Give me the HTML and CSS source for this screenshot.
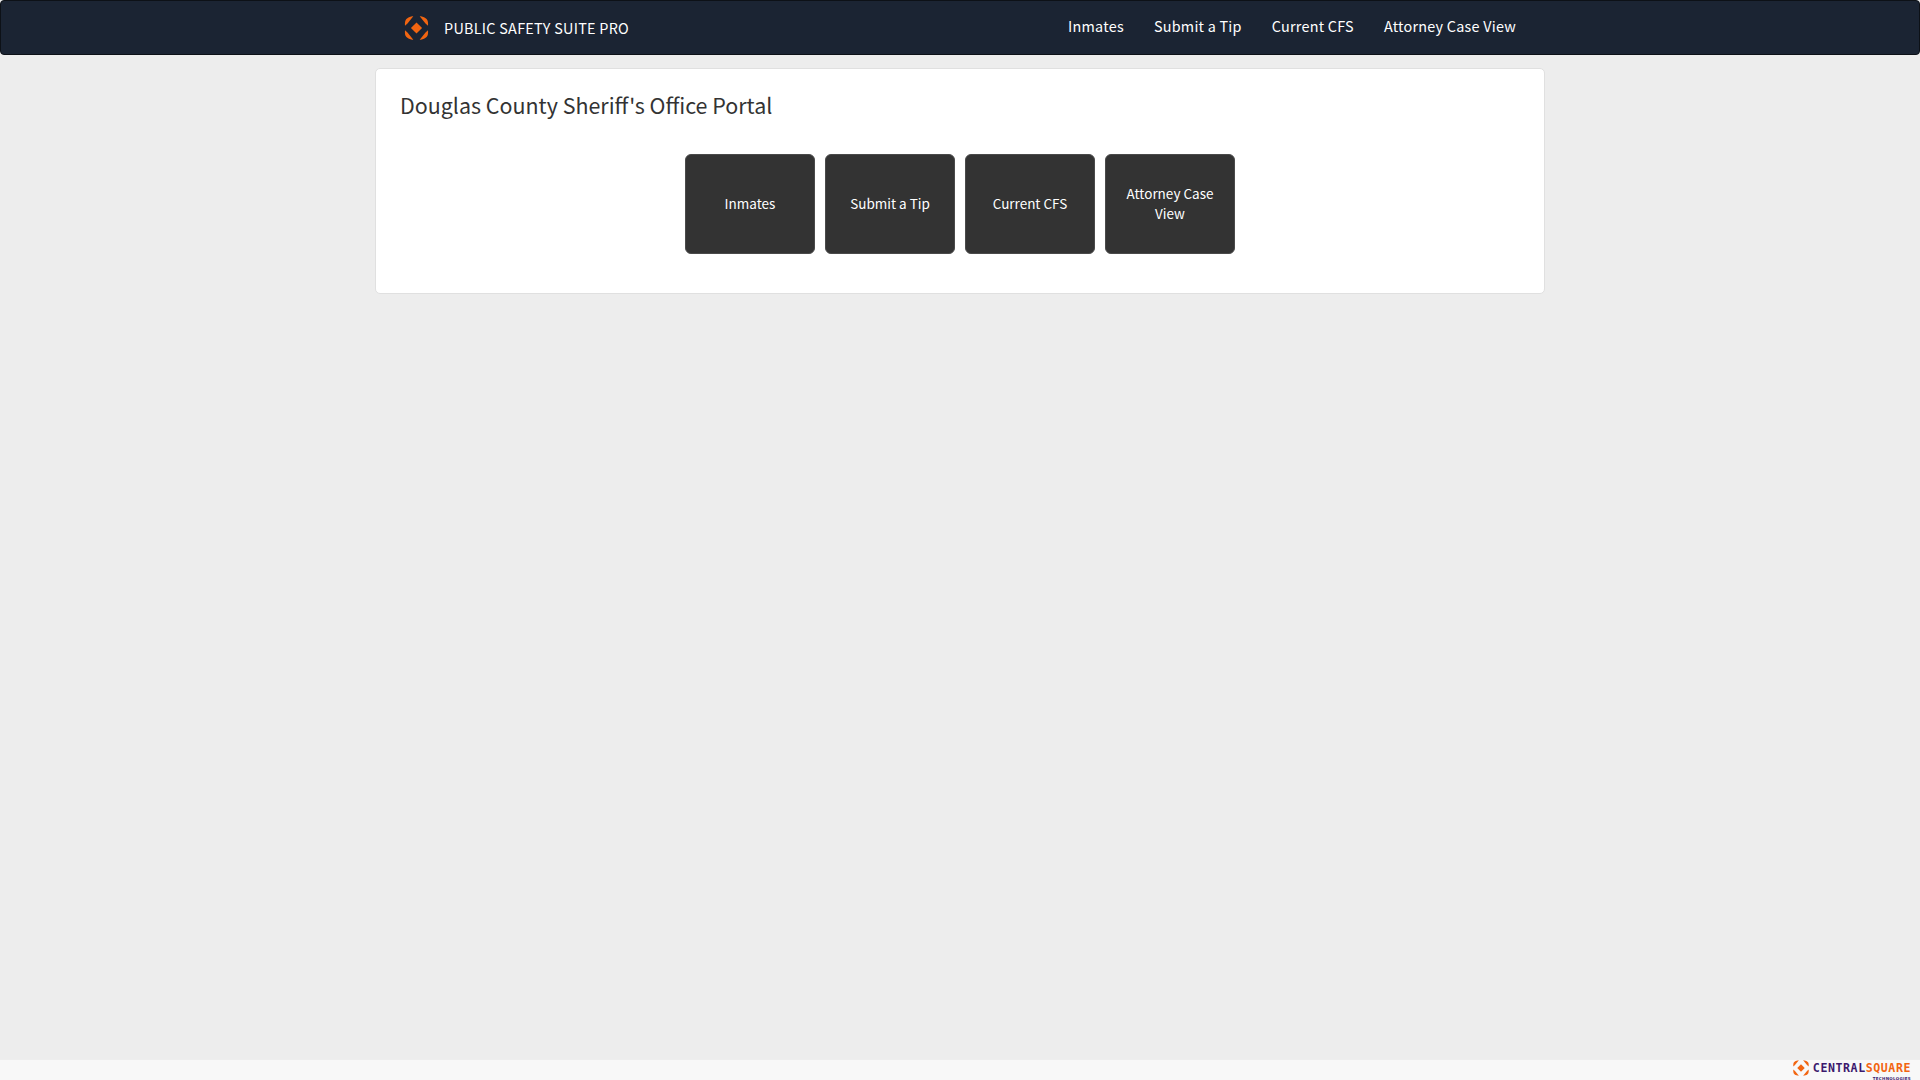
FILE: index.html
```html
<!DOCTYPE html>
<html>

<head>
    <meta charset="utf-8">
    <title>Public Safety Suite Pro</title>
    <link rel="stylesheet" href="styles.css">
</head>

<body>
    <nav class="navbar">
        <div class="navbar-inner">
            <a class="brand" href="#">
                <svg class="brand-logo" viewBox="0 0 24 24" width="25" height="24">
                    <path d="M12 6.4L17.6 12L12 17.6L6.4 12Z" fill="#f26511" />
                    <path d="M5.2 1C6 .6 7.4 .3 8.8 .3L3 7.6L.5 9.8C.3 7.6 .4 5.4 1.2 3.9C2 2.6 3.6 1.6 5.2 1Z" fill="#f26511" />
                    <path d="M18.8 1C18 .6 16.6 .3 15.2 .3L21 7.6L23.5 9.8C23.7 7.6 23.6 5.4 22.8 3.9C22 2.6 20.4 1.6 18.8 1Z" fill="#f26511" />
                    <path d="M5.2 23C6 23.4 7.4 23.7 8.8 23.7L3 16.4L.5 14.2C.3 16.4 .4 18.6 1.2 20.1C2 21.4 3.6 22.4 5.2 23Z" fill="#f26511" />
                    <path d="M18.8 23C18 23.4 16.6 23.7 15.2 23.7L21 16.4L23.5 14.2C23.7 16.4 23.6 18.6 22.8 20.1C22 21.4 20.4 22.4 18.8 23Z" fill="#f26511" />
                </svg>
                <span class="brand-name">PUBLIC SAFETY SUITE PRO</span>
            </a>
            <ul class="nav-links">
                <li><a href="#">Inmates</a></li>
                <li><a href="#">Submit a Tip</a></li>
                <li><a href="#">Current CFS</a></li>
                <li><a href="#">Attorney Case View</a></li>
            </ul>
        </div>
    </nav>

    <main class="container">
        <section class="panel">
            <h1 class="panel-title">Douglas County Sheriff's Office Portal</h1>
            <div class="tiles">
                <a class="tile" href="#">Inmates</a>
                <a class="tile" href="#">Submit a Tip</a>
                <a class="tile" href="#">Current CFS</a>
                <a class="tile" href="#">Attorney Case View</a>
            </div>
        </section>
    </main>

    <footer class="footer">
        <div class="vendor">
            <svg class="vendor-logo" viewBox="0 0 24 24" width="16" height="16">
                <path d="M12 6.4L17.6 12L12 17.6L6.4 12Z" fill="#f26511" />
                <path d="M5.2 1C6 .6 7.4 .3 8.8 .3L3 7.6L.5 9.8C.3 7.6 .4 5.4 1.2 3.9C2 2.6 3.6 1.6 5.2 1Z" fill="#f26511" />
                <path d="M18.8 1C18 .6 16.6 .3 15.2 .3L21 7.6L23.5 9.8C23.7 7.6 23.6 5.4 22.8 3.9C22 2.6 20.4 1.6 18.8 1Z" fill="#f26511" />
                <path d="M5.2 23C6 23.4 7.4 23.7 8.8 23.7L3 16.4L.5 14.2C.3 16.4 .4 18.6 1.2 20.1C2 21.4 3.6 22.4 5.2 23Z" fill="#f26511" />
                <path d="M18.8 23C18 23.4 16.6 23.7 15.2 23.7L21 16.4L23.5 14.2C23.7 16.4 23.6 18.6 22.8 20.1C22 21.4 20.4 22.4 18.8 23Z" fill="#f26511" />
            </svg>
            <div class="vendor-text">
                <div class="vendor-name">CENTRAL<span class="vendor-accent">SQUARE</span></div>
                <div class="vendor-sub">TECHNOLOGIES</div>
            </div>
        </div>
    </footer>
</body>

</html>
```

FILE: styles.css
```css
* {
    box-sizing: border-box;
}

html,
body {
    height: 100%;
}

body {
    margin: 0;
    display: flex;
    flex-direction: column;
    height: 1080px;
    overflow: hidden;
    background: #ededed;
    color: #333;
    font-family: "Noto Sans CJK SC", "Noto Sans", sans-serif;
    font-size: 14px;
}

a {
    color: inherit;
    text-decoration: none;
}

.navbar {
    height: 55px;
    flex: none;
    background: #1b2433;
    border: 1px solid #0d1117;
    border-radius: 4px;
}

.navbar-inner {
    width: 1170px;
    height: 53px;
    margin: 0 auto;
    display: flex;
    justify-content: space-between;
    align-items: center;
    color: #fff;
}

.brand {
    display: flex;
    align-items: center;
    padding-left: 29px;
}

.brand-logo {
    margin-right: 15px;
}

.brand-name {
    font-size: 14.4px;
    line-height: 20px;
    letter-spacing: .27px;
}

.nav-links {
    display: flex;
    gap: 30px;
    list-style: none;
    margin: 0 0 3px;
    padding: 0 29px 0 0;
    font-size: 14.4px;
    letter-spacing: .24px;
    line-height: 20px;
}

.container {
    width: 1170px;
    margin: 13px auto 0;
    flex: 1;
}

.panel {
    height: 226px;
    padding: 20px 24px;
    background: #fff;
    border: 1px solid #e0e0e0;
    border-radius: 5px;
}

.panel-title {
    margin: -1px 0 0;
    font-size: 21.45px;
    font-weight: 400;
    line-height: 33px;
    color: #333;
}

.tiles {
    display: flex;
    justify-content: center;
    gap: 10px;
    margin-top: 33px;
}

.tile {
    width: 130px;
    height: 100px;
    padding: 0 15px 2px;
    display: flex;
    align-items: center;
    justify-content: center;
    text-align: center;
    line-height: 20px;
    font-size: 13.5px;
    color: #fff;
    background: #333;
    border: 1px solid #4a4a4a;
    border-radius: 6px;
}

.footer {
    height: 21px;
    flex: none;
    display: flex;
    justify-content: flex-end;
    background: #f8f8f8;
    border-top: 1px solid #eee;
}

.vendor {
    display: flex;
    align-items: flex-start;
    padding: 0 9px 0 0;
}

.vendor-logo {
    margin: 0 4px 0 0;
}

.vendor-text {
    text-align: right;
}

.vendor-name {
    font-family: "DejaVu Sans Mono", monospace;
    font-size: 11.6px;
    font-weight: 700;
    line-height: 16px;
    letter-spacing: .57px;
    color: #3d1a6e;
}

.vendor-accent {
    color: #f26511;
}

.vendor-sub {
    font-family: "DejaVu Sans", sans-serif;
    font-size: 4px;
    font-weight: 700;
    line-height: 5px;
    letter-spacing: .3px;
    color: #3d1a6e;
}
```
